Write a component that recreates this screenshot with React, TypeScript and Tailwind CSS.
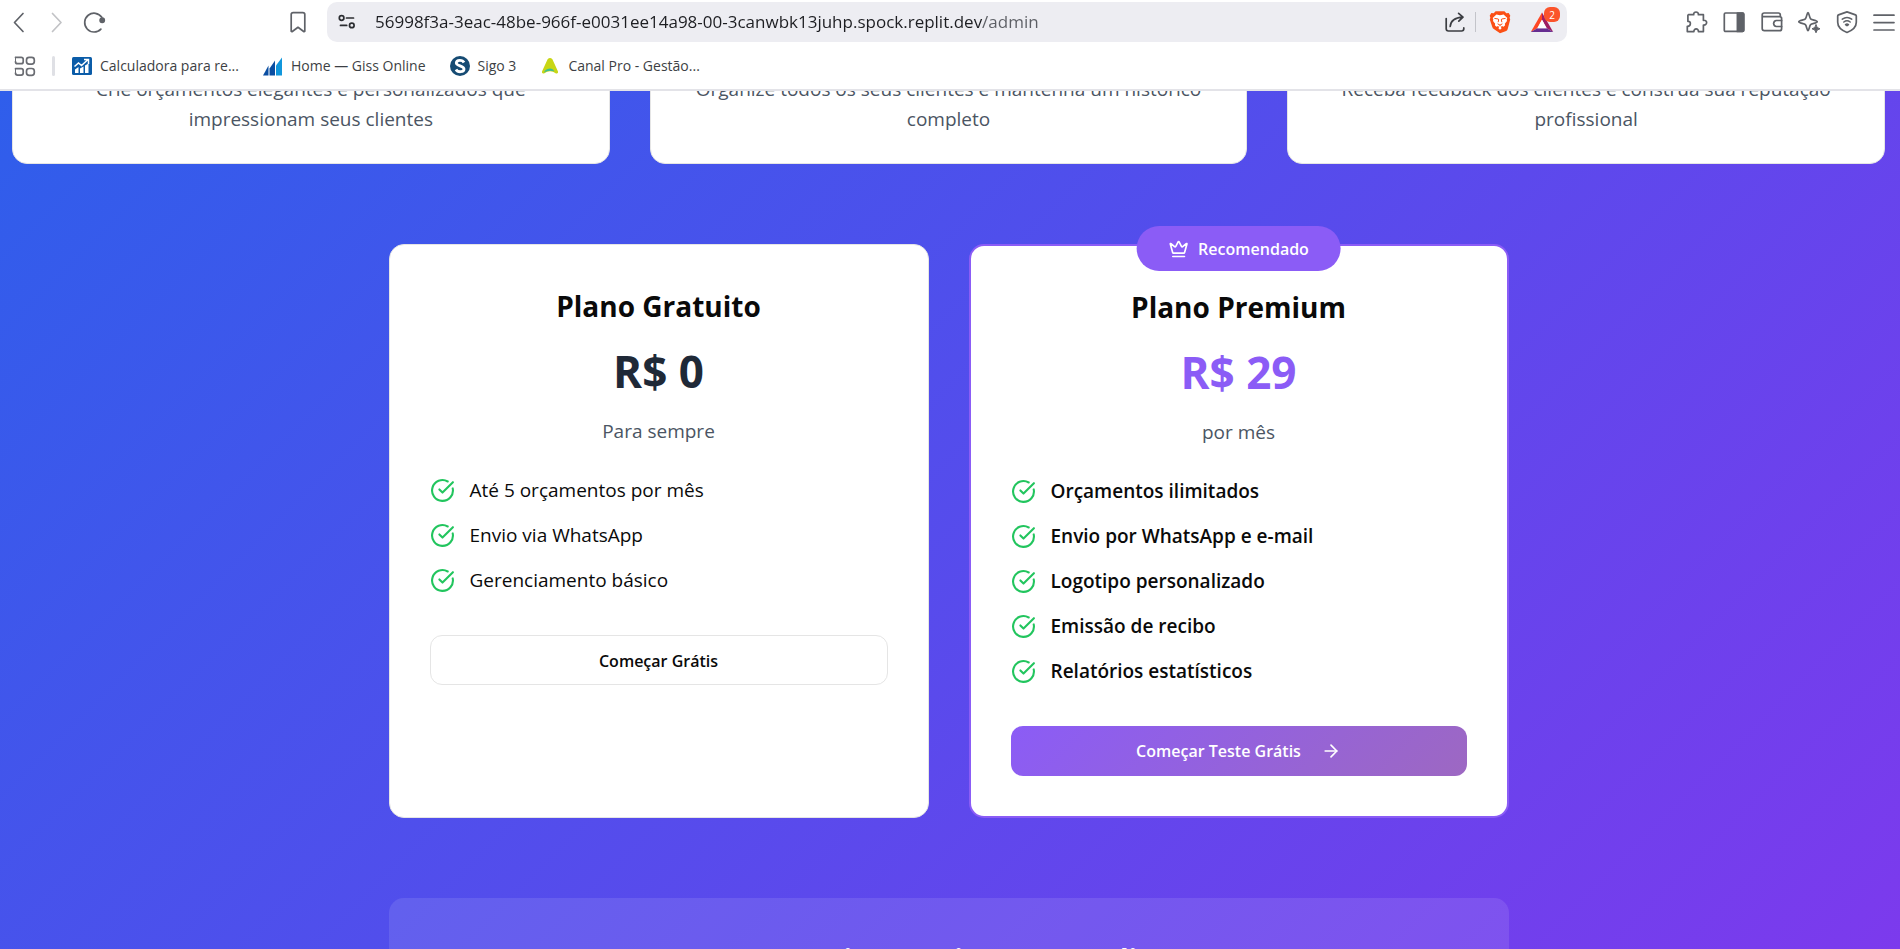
import type { ReactNode } from "react";
import { ArrowRight, CircleCheckBig, Crown } from "lucide-react";

function Glyph({ children, className = "" }: { children: ReactNode; className?: string }) {
  return (
    <svg
      viewBox="0 0 24 24"
      fill="none"
      stroke="currentColor"
      strokeWidth="1.7"
      strokeLinecap="round"
      strokeLinejoin="round"
      aria-hidden="true"
      className={`size-6 shrink-0 ${className}`}
    >
      {children}
    </svg>
  );
}

function IconButton({ label, children }: { label: string; children: ReactNode }) {
  return (
    <button type="button" aria-label={label} className="flex size-6 shrink-0 items-center justify-center">
      {children}
    </button>
  );
}

function AddressBar() {
  return (
    <div className="flex h-10 min-w-0 flex-1 items-center rounded-[10px] bg-[#ededf2] pr-[13px] pl-2 text-[#3b3d42]">
      <IconButton label="Informações do site">
        <Glyph className="text-[#2b2d31]">
          <circle cx="6.6" cy="8" r="2.3" />
          <path d="M11.5 8h7" />
          <circle cx="16.8" cy="15.4" r="2.3" />
          <path d="M5.5 15.4h6.2" />
        </Glyph>
      </IconButton>
      <input
        type="text"
        aria-label="Endereço"
        defaultValue="56998f3a-3eac-48be-966f-e0031ee14a98-00-3canwbk13juhp.spock.replit.dev/admin"
        className="ml-4 h-6 min-w-0 flex-1 bg-[linear-gradient(90deg,#1d1e22_607px,#5c5e64_607px)] bg-clip-text text-[17px] leading-6 text-transparent outline-none"
      />
      <IconButton label="Compartilhar">
        <Glyph>
          <path d="M3.2 8.5v10.3q0 2.2 2.2 2.2h13.2q2.2 0 2.2-2.2v-.9" />
          <path d="M7.2 16.5q.6-8.6 12.6-9.3M15.6 3.4l4.4 3.8-4.2 4" />
        </Glyph>
      </IconButton>
      <span className="mr-3 ml-2 h-5 w-px bg-[#c3c4ca]" />
      <IconButton label="Brave Shields">
        <svg viewBox="0 0 24 24" aria-hidden="true" className="size-6">
          <path
            d="M7.6 1.2h8.8l1.9 2.1 2.4-.2 1.6 2.6-.7 2 .6 1.8-2.5 9.4q-.4 1.3-1.5 2L12 23.3l-6.2-4.4q-1.1-.7-1.5-2L1.8 9.5l.6-1.8-.7-2 1.6-2.6 2.4.2z"
            fill="#fb4f14"
          />
          <path
            d="m8.400 4.600 3.600.7 3.600-.7 3.700 3.500-.6 1.500.3 1.300-2.200 2.900.3 1.400-1.500 1.600-1.700-.8-.9.900.5 1.500L12 19.800l-1.500-1.400.5-1.500-.9-.9-1.700.8-1.500-1.600.3-1.400L5 10.900l.3-1.300-.6-1.500z"
            fill="#fff"
          />
          <path
            d="m6.400 8.400 3.900.6.400.9-.6 2.300M17.600 8.400l-3.900.6-.4.9.6 2.300M9.600 13.800l2.400 1.300 2.400-1.300M12 15.100v1.200"
            fill="none"
            stroke="#fb4f14"
            strokeWidth="1"
          />
        </svg>
      </IconButton>
      <button type="button" aria-label="Brave Rewards, 2 notificações" className="relative ml-[18px] size-6 shrink-0">
        <svg viewBox="0 0 24 24" aria-hidden="true" className="size-6">
          <path d="M12 2.500.8 22 7.300 18.200 12 9.700z" fill="#ff4724" />
          <path d="M12 2.500 23.200 22l-6.500-3.800L12 9.700z" fill="#9e1f63" />
          <path d="M.8 22h22.400l-6.500-3.800H7.300z" fill="#662d91" />
          <path d="M12 9.700 16.700 18.200H7.300z" fill="#fff" />
        </svg>
        <span className="absolute -top-[3px] -right-1.5 flex h-[15px] w-4 items-center justify-center rounded-md bg-[#fb542b] text-[10px] leading-none text-white">
          2
        </span>
      </button>
    </div>
  );
}

function NavigationRow() {
  return (
    <div className="flex h-11 items-center pr-1 pl-[7px] text-[#5f6268]">
      <IconButton label="Voltar">
        <Glyph>
          <path d="M16 3.500 7.500 12.500l8.500 9" />
        </Glyph>
      </IconButton>
      <span className="w-3.5" />
      <IconButton label="Avançar">
        <Glyph className="text-[#c2c3c6]">
          <path d="m7.500 3.500 8.500 9-8.500 9" />
        </Glyph>
      </IconButton>
      <span className="w-[13px]" />
      <IconButton label="Recarregar">
        <Glyph>
          <path d="M18.900 19.100A9.400 9.400 0 1 1 19.800 7.200" />
          <circle cx="20.200" cy="10.200" r="2.100" fill="currentColor" />
        </Glyph>
      </IconButton>
      <span className="w-[180px] shrink" />
      <IconButton label="Adicionar aos favoritos">
        <Glyph>
          <path d="M5.200 4.600q0-2 2-2h9.600q2 0 2 2v16.700l-.8.400-6-4.400-6 4.400-.8-.4z" />
        </Glyph>
      </IconButton>
      <span className="w-[17px]" />
      <AddressBar />
      <div className="ml-[118px] flex w-[211px] shrink-0 justify-between">
        <IconButton label="Extensões">
          <Glyph>
            <path d="M3.500 4.700h5.200c-.4-3.600 5-3.600 4.700 0h5v5.600c4.300-.6 4.300 5.200 0 4.700v6.600h-5c.3-3.500-4.700-3.500-4.500 0H2.300v-5.300c4 .2 4-5.400.6-5V5.300z" />
          </Glyph>
        </IconButton>
        <IconButton label="Barra lateral">
          <Glyph>
            <rect x="2.300" y="3" width="19.400" height="18.400" rx="1.200" />
            <path d="M15.400 3h5.100q1.200 0 1.200 1.200v16q0 1.200-1.200 1.200h-5.100z" fill="currentColor" />
          </Glyph>
        </IconButton>
        <IconButton label="Carteira">
          <Glyph>
            <path d="M20.300 6.600V5q0-2-2-2H4.200q-2 0-2 2v13.500q0 2.200 2.200 2.200h15.200q2 0 2-2V8.600q0-2-2-2H4q-1.600 0-1.800-1.300" />
            <path d="M21.600 10.500h-5.200q-2.600.2-2.800 3 .2 2.800 2.800 3h5.200" />
          </Glyph>
        </IconButton>
        <IconButton label="Assistente">
          <Glyph>
            <path d="M11 2.600c1 0 1.400 5 2.600 6.200s6.600 1.600 6.600 2.900-5.400 1.700-6.600 2.900-1.600 6-2.600 6-1.400-4.800-2.600-6-6.600-1.600-6.600-2.900S7.200 10 8.400 8.800 10 2.600 11 2.600z" />
            <path d="M19 14.800q.4 3.600 4 4-3.600.4-4 4-.4-3.600-4-4 3.600-.4 4-4z" fill="currentColor" strokeWidth="1" />
          </Glyph>
        </IconButton>
        <IconButton label="VPN">
          <Glyph>
            <path d="m12 1.900 8.500 3q.8.300.8 1.200v6.200c0 4.500-4.400 8.300-9.300 10.200-4.900-1.900-9.300-5.700-9.300-10.200V6.100q0-.9.800-1.200z" />
            <path d="M7.300 9.200q4.700-3.500 9.400 0M8.800 12q3.200-2.400 6.400 0M10.500 14.600q1.500-1.100 3 0l-1.500 1.100z" strokeWidth="1.500" />
          </Glyph>
        </IconButton>
        <IconButton label="Menu">
          <Glyph>
            <path d="M2 5.200h20M2 12.600h20M2 20h20" />
          </Glyph>
        </IconButton>
      </div>
    </div>
  );
}

function Bookmark({ label, icon, className }: { label: string; icon: ReactNode; className?: string }) {
  return (
    <a href="#" className={`flex items-center gap-2 whitespace-nowrap ${className ?? ""}`}>
      {icon}
      {label}
    </a>
  );
}

function BookmarksRow() {
  return (
    <nav aria-label="Favoritos" className="flex h-[45px] items-center pb-0.5 pl-[13px] text-[14px] text-[#3d3f44]">
      <button type="button" aria-label="Todos os apps" className="text-[#6a6c72]">
        <Glyph>
          <path d="M2.500 3.300h5.700q2 0 2 2v2.400q0 2-2 2H4.500q-2 0-2-2M2.500 14.700h5.700q2 0 2 2v2.400q0 2-2 2H4.500q-2 0-2-2" />
          <rect x="13.500" y="3.300" width="7.800" height="6.800" rx="2.600" />
          <rect x="13.500" y="14.500" width="7.800" height="6.800" rx="2.600" />
          <path d="M2.500 3.300v4.400M2.500 14.700v4.400" strokeWidth="1" />
        </Glyph>
      </button>
      <span className="mr-[17px] ml-[15px] h-5 w-[3px] rounded-full bg-[#dfe0e5]" />
      <Bookmark
        label="Calculadora para re..."
        icon={
          <svg viewBox="0 0 20 20" aria-hidden="true" className="size-5">
            <rect x="0" y="1" width="20" height="18" rx="1.500" fill="#0b5ca8" />
            <path d="M2.500 10.500 6.500 7l3 2.500 6-5.500M12 3.500h4.500V8" fill="none" stroke="#fff" strokeWidth="1.500" />
            <path d="M3 13.500 6.500 11v6H3zM8 12.500l3.500-2V17H8zM13 9.500l3.500-2V17H13z" fill="#fff" />
          </svg>
        }
      />
      <Bookmark
        className="ml-6"
        label="Home — Giss Online"
        icon={
          <svg viewBox="0 0 20 20" aria-hidden="true" className="size-5">
            <path d="M0 19.500 5.500 9.500v10z" fill="#0a4ea2" />
            <path d="M6.500 19.500v-7l5.500-8v15z" fill="#0a4ea2" />
            <path d="M13 19.500V9.500l6-8v18z" fill="#1197dc" />
          </svg>
        }
      />
      <Bookmark
        className="ml-6"
        label="Sigo 3"
        icon={
          <svg viewBox="0 0 20 20" aria-hidden="true" className="size-5">
            <circle cx="10" cy="10" r="10" fill="#164b73" />
            <path d="M14 6.500C12.500 3.500 6.500 3.500 6.300 7c0 3.200 7.700 2.600 7.700 6 0 3.500-6.300 3.600-8 .5" fill="none" stroke="#fff" strokeWidth="2.800" />
          </svg>
        }
      />
      <Bookmark
        className="ml-6"
        label="Canal Pro - Gestão..."
        icon={
          <svg viewBox="0 0 20 20" aria-hidden="true" className="size-5">
            <path d="M7.600 3.200Q10 .6 12.400 3.200L18 15.400q.6 2.400-2 2-6-4.400-12 0-2.600.4-2-2z" fill="#c8d615" />
            <path d="M4 16.600q1-3.600 6-4.200 3 0 4.400 3-5.400-1.800-10.400 1.200z" fill="#3fbf8f" />
          </svg>
        }
      />
    </nav>
  );
}

const FEATURES = [
  "Crie orçamentos elegantes e personalizados que impressionam seus clientes",
  "Organize todos os seus clientes e mantenha um histórico completo",
  "Receba feedback dos clientes e construa sua reputação profissional",
];

const FREE_ITEMS = ["Até 5 orçamentos por mês", "Envio via WhatsApp", "Gerenciamento básico"];

const PREMIUM_ITEMS = [
  "Orçamentos ilimitados",
  "Envio por WhatsApp e e-mail",
  "Logotipo personalizado",
  "Emissão de recibo",
  "Relatórios estatísticos",
];

function PlanHeader({ name, price, period, priceClass }: { name: string; price: string; period: string; priceClass: string }) {
  return (
    <header className="mb-[29px] flex flex-col gap-5 pt-px text-center">
      <h3 className="text-[28px] leading-10 font-bold">{name}</h3>
      <p className={`text-[44px] leading-[50px] font-bold ${priceClass}`}>{price}</p>
      <p className="text-[19px] leading-[30px] text-[#4b5563]">{period}</p>
    </header>
  );
}

function PlanItems({ items, itemClass = "" }: { items: string[]; itemClass?: string }) {
  return (
    <ul className="mb-10 flex flex-col gap-[15px]">
      {items.map((item) => (
        <li key={item} className="flex items-center gap-[15px]">
          <CircleCheckBig className="size-[25px] shrink-0" color="#22c55e" />
          <span className={`text-[19px] leading-[30px] ${itemClass}`}>{item}</span>
        </li>
      ))}
    </ul>
  );
}

export default function App() {
  return (
    <div className="flex h-screen flex-col overflow-hidden bg-white font-['Open_Sans','Noto_Sans',sans-serif] text-[#0a0a0a]">
      <div className="shrink-0 border-b-2 border-[#e3e3e8]">
        <NavigationRow />
        <BookmarksRow />
      </div>

      <main className="min-h-0 flex-1 overflow-hidden bg-[linear-gradient(135deg,#2f5eeb,#7c3aed)] pr-[15px] pl-3">
        <section className="-mt-12 grid grid-cols-3 gap-10">
          {FEATURES.map((text) => (
            <article key={text} className="rounded-[15px] border border-[#e5e5e5] bg-white px-[30px] pt-[30px] pb-[29px]">
              <p className="text-center text-[19px] leading-[30px] text-[#4b5563]">{text}</p>
            </article>
          ))}
        </section>

        <section className="mx-auto mt-20 grid max-w-[1120px] grid-cols-2 gap-10">
          <article className="rounded-[15px] border border-[#e5e5e5] bg-white p-10">
            <PlanHeader name="Plano Gratuito" price="R$ 0" period="Para sempre" priceClass="text-[#1f2937]" />
            <PlanItems items={FREE_ITEMS} />
            <button type="button" className="h-[50px] w-full rounded-xl border border-[#e5e5e5] bg-white pt-0.5 text-[16px] font-semibold">
              Começar Grátis
            </button>
          </article>

          <article className="relative rounded-[15px] border-2 border-[#8b5cf6] bg-white p-10">
            <div className="absolute -top-5 left-1/2 flex h-[45px] -translate-x-1/2 items-center gap-2.5 rounded-full bg-[#8b5cf6] px-8 text-[16px] font-semibold text-white">
              <Crown className="size-5" />
              Recomendado
            </div>
            <PlanHeader name="Plano Premium" price="R$ 29" period="por mês" priceClass="text-[#8b5cf6]" />
            <PlanItems items={PREMIUM_ITEMS} itemClass="font-semibold" />
            <button
              type="button"
              className="flex h-[50px] w-full items-center justify-center gap-5 rounded-xl bg-[linear-gradient(135deg,#8b5cf6,#9d68c2)] text-[16px] font-semibold text-white"
            >
              Começar Teste Grátis
              <ArrowRight className="size-5" />
            </button>
          </article>
        </section>

        <section className="mx-auto mt-20 max-w-[1120px] rounded-[15px] bg-white/10 px-10 pt-[41px] pb-10 text-center text-white">
          <h2 className="text-[28px] leading-10 font-bold">Pronto para impressionar seus clientes?</h2>
        </section>
      </main>
    </div>
  );
}
